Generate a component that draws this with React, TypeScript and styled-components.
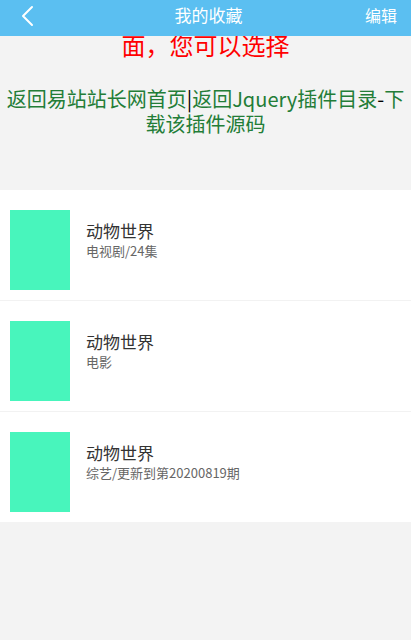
import React from 'react';
import styled, { createGlobalStyle } from 'styled-components';

const GlobalStyle = createGlobalStyle`
  html, body {
    margin: 0;
    padding: 0;
    background-color: #f3f3f3;
    font-family: "Noto Sans CJK SC", "Noto Sans", sans-serif;
  }
`;

const Page = styled.div`
  min-height: 640px;
  background-color: #f3f3f3;
`;

const Header = styled.div`
  position: fixed;
  top: 0;
  left: 0;
  right: 0;
  height: 36px;
  background-color: #5bbff1;
  display: flex;
  align-items: center;
  justify-content: space-between;
  padding: 0 14px 6px 20px;
  box-sizing: border-box;
  z-index: 10;
`;

const BackButton = styled.div`
  width: 40px;
  display: flex;
  align-items: center;
  padding-top: 2px;
`;

const HeaderTitle = styled.div`
  color: #fff;
  font-size: 17px;
  line-height: 24px;
`;

const EditButton = styled.div`
  width: 40px;
  text-align: right;
  color: #fff;
  font-size: 16px;
  line-height: 24px;
`;

const Notice = styled.div`
  color: #ff0000;
  font-size: 24px;
  line-height: 30px;
  text-align: center;
`;

const Links = styled.div`
  margin-top: 26px;
  padding: 0 6px;
  font-size: 20px;
  line-height: 25px;
  text-align: center;
  color: #000;

  a {
    color: #237d37;
    text-decoration: none;
  }
`;

const List = styled.ul`
  list-style: none;
  margin: 54px 0 0 0;
  padding: 0;
  background-color: #fff;
`;

const Item = styled.li`
  display: flex;
  padding: 20px 10px 10px 10px;
  border-bottom: 1px solid #f2f2f2;

  &:last-child {
    border-bottom: none;
  }
`;

const Thumb = styled.div`
  width: 60px;
  height: 80px;
  background-color: #48f5bc;
  flex-shrink: 0;
`;

const Info = styled.div`
  margin-left: 16px;
  padding-top: 10px;
`;

const Title = styled.div`
  font-size: 17px;
  line-height: 22px;
  color: #333;
`;

const Sub = styled.div`
  font-size: 13px;
  line-height: 18px;
  color: #666;
`;

const items = [
  { title: '动物世界', sub: '电视剧/24集' },
  { title: '动物世界', sub: '电影' },
  { title: '动物世界', sub: '综艺/更新到第20200819期' },
];

export default function App() {
  return (
    <Page>
      <GlobalStyle />
      <Header>
        <BackButton>
          <svg width="14" height="22" viewBox="0 0 14 22" fill="none">
            <polyline points="12,2 3,11 12,20" stroke="#fff" strokeWidth="2" strokeLinecap="round" strokeLinejoin="round" />
          </svg>
        </BackButton>
        <HeaderTitle>我的收藏</HeaderTitle>
        <EditButton>编辑</EditButton>
      </Header>

      <Notice>
        本插件仅供学习，若您看到此页<br />
        面，您可以选择
      </Notice>

      <Links>
        <a href="#">返回易站站长网首页</a>|<a href="#">返回Jquery插件目录</a>-<a href="#">下载该插件源码</a>
      </Links>

      <List>
        {items.map((it, i) => (
          <Item key={i}>
            <Thumb />
            <Info>
              <Title>{it.title}</Title>
              <Sub>{it.sub}</Sub>
            </Info>
          </Item>
        ))}
      </List>
    </Page>
  );
}
